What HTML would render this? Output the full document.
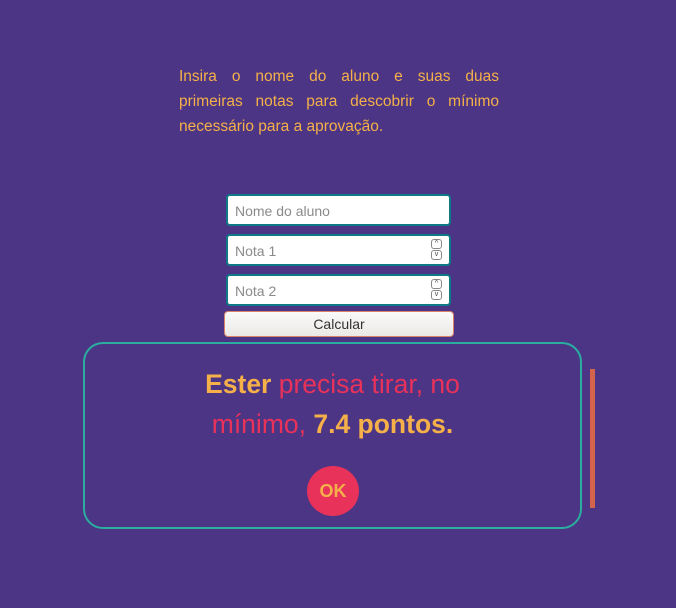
<!DOCTYPE html>
<html><head><meta charset="utf-8"><style>
*{box-sizing:border-box;margin:0;padding:0}
body{width:676px;height:608px;background:#4b3584;font-family:"Liberation Sans",sans-serif;position:relative;overflow:hidden}
.intro{position:absolute;left:179px;top:64px;width:320px;color:#f5b049;font-size:15.5px;line-height:25px}
.intro div{white-space:nowrap}
.intro .j{text-align:justify;text-align-last:justify;white-space:normal}
.inp{position:absolute;left:226px;width:225px;height:32px;background:#fff;border:2px solid #0f7a86;border-radius:4px;color:#8a8a8a;font-size:14px;padding:7px 0 0 7px}
.spin{position:absolute;right:7px;top:3px;width:11px}
.spin div{width:11px;height:10px;border:1px solid #888;border-radius:3px;font-size:7px;line-height:8px;text-align:center;color:#444;margin-bottom:1px}
.btn{position:absolute;left:224px;top:311px;width:230px;height:26px;background:linear-gradient(#fafafa,#ebe9e6);border:1px solid #d9826a;border-radius:4px;text-align:center;font-size:14px;line-height:25px;color:#333}
.modal{position:absolute;left:83px;top:342px;width:499px;height:187px;border:2px solid #2aaea0;border-radius:20px}
.msg{position:absolute;left:0;top:20px;width:100%;text-align:center;font-size:26.5px;line-height:40px;color:#e8325a}
.msg b{color:#f5b049}
.ok{position:absolute;left:222px;top:122px;width:52px;height:50px;border-radius:50%;background:#e8325a;color:#f5b049;font-weight:bold;font-size:18px;text-align:center;line-height:50px}
.bar{position:absolute;left:590px;top:369px;width:5px;height:139px;background:#d2634c}
</style></head><body>
<div class="intro"><div class="j">Insira o nome do aluno e suas duas</div><div class="j">primeiras notas para descobrir o mínimo</div><div>necessário para a aprovação.</div></div>
<div class="inp" style="top:194px">Nome do aluno</div>
<div class="inp" style="top:234px">Nota 1<div class="spin"><div>^</div><div>v</div></div></div>
<div class="inp" style="top:274px">Nota 2<div class="spin"><div>^</div><div>v</div></div></div>
<div class="btn">Calcular</div>
<div class="modal">
<div class="msg"><b>Ester</b> precisa tirar, no<br>mínimo, <b>7.4 pontos.</b></div>
<div class="ok">OK</div>
</div>
<div class="bar"></div>
</body></html>
